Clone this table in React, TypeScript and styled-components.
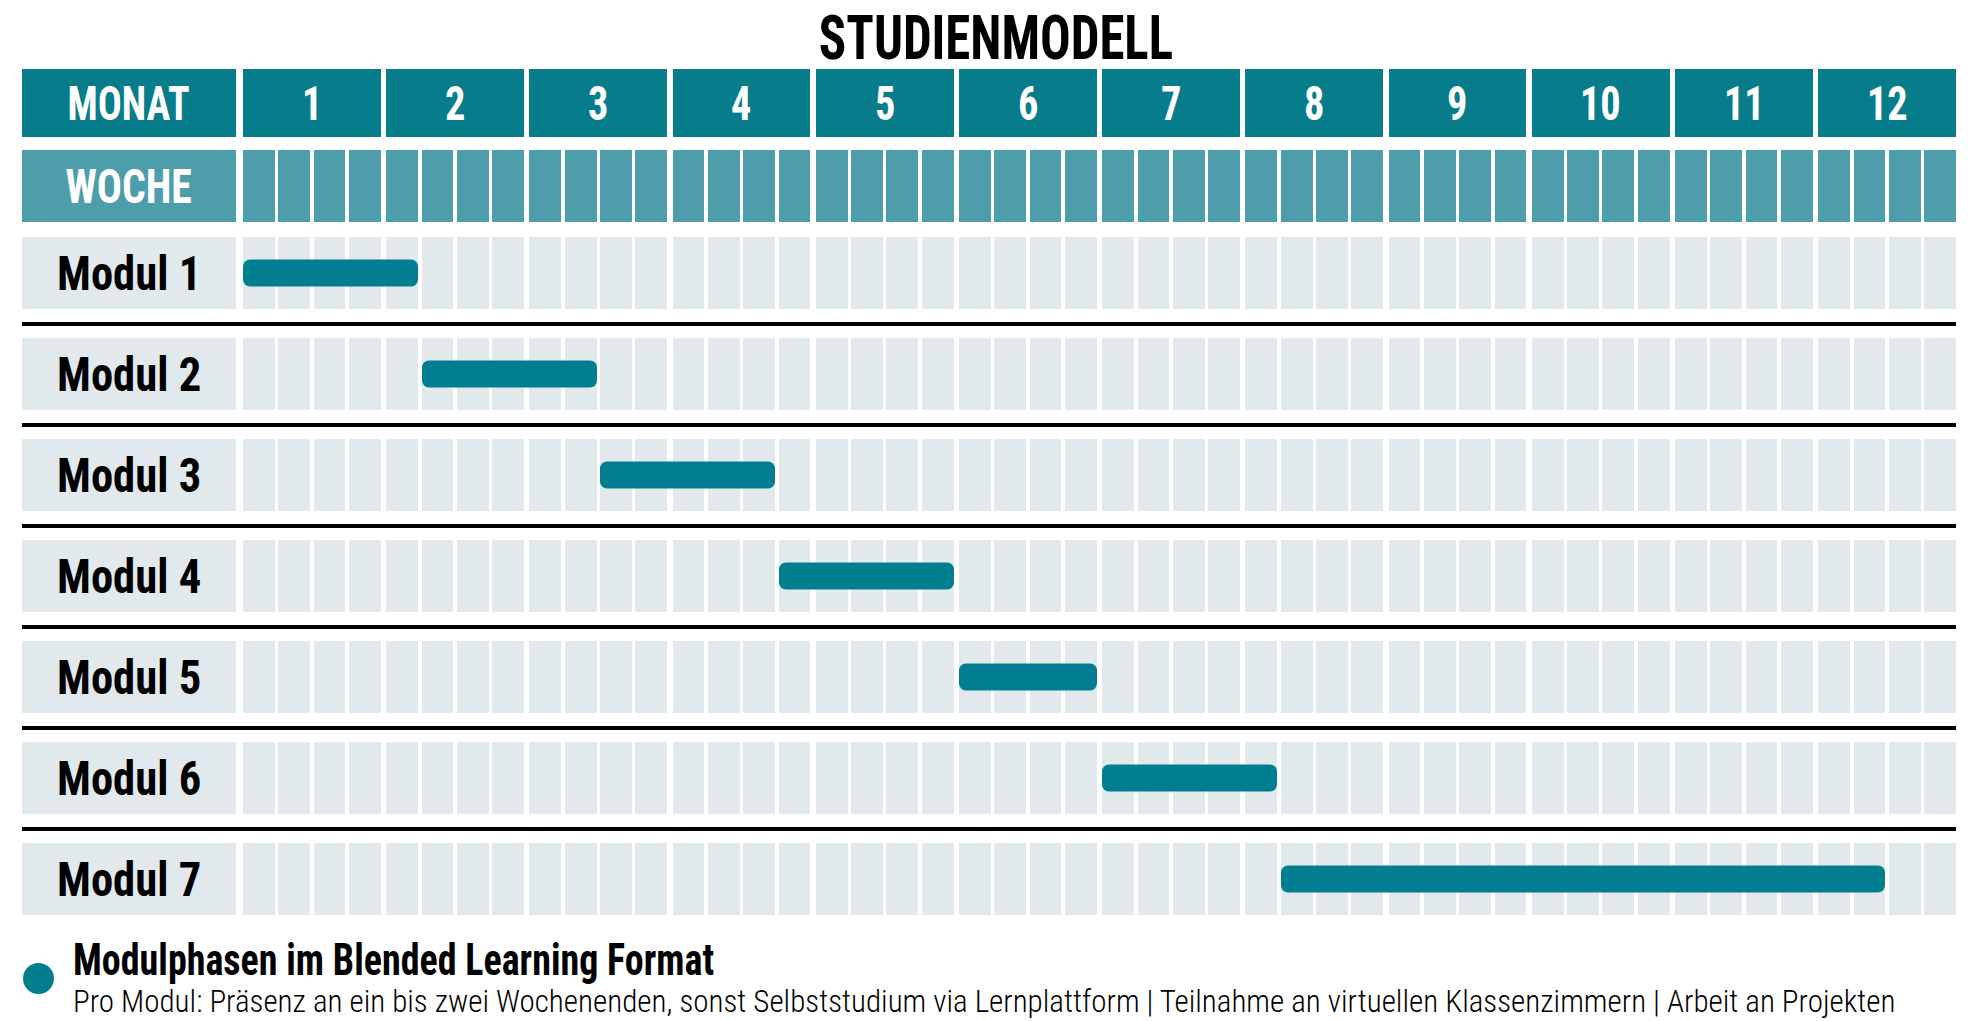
import styled, { createGlobalStyle } from "styled-components";

// grid geometry (px) taken from the reference
const TRACK_WIDTH = 1713;
const MONTH_GAP = 5.5;
const WEEK_GAP = 3.5;
const MONTH_WIDTH = (TRACK_WIDTH - 11 * MONTH_GAP) / 12;
const WEEK_WIDTH = (MONTH_WIDTH - 3 * WEEK_GAP) / 4;

const months = Array.from({ length: 12 }, (_, i) => i + 1);

// first and last week (0-based) of every module phase
const modules = [
  { name: "Modul 1", from: 0, to: 4 },
  { name: "Modul 2", from: 5, to: 9 },
  { name: "Modul 3", from: 10, to: 14 },
  { name: "Modul 4", from: 15, to: 19 },
  { name: "Modul 5", from: 20, to: 23 },
  { name: "Modul 6", from: 24, to: 28 },
  { name: "Modul 7", from: 29, to: 45 },
];

function weekStart(i: number) {
  return Math.floor(i / 4) * (MONTH_WIDTH + MONTH_GAP) + (i % 4) * (WEEK_WIDTH + WEEK_GAP);
}

function WeekCells({ tone }: { tone: "head" | "body" }) {
  return (
    <MonthTrack>
      {months.map((m) => (
        <WeekGroup key={m}>
          {[0, 1, 2, 3].map((w) => (
            <WeekCell key={w} $tone={tone} />
          ))}
        </WeekGroup>
      ))}
    </MonthTrack>
  );
}

function App() {
  return (
    <>
      <GlobalStyle />
      <Page>
        <Title>
          <Squeeze $x={0.82}>STUDIENMODELL</Squeeze>
        </Title>

        <Row $height={68}>
          <LabelCell $tone="dark">
            <Squeeze $x={0.83}>MONAT</Squeeze>
          </LabelCell>
          <MonthTrack>
            {months.map((m) => (
              <MonthCell key={m}>
                <Squeeze $x={0.84}>{m}</Squeeze>
              </MonthCell>
            ))}
          </MonthTrack>
        </Row>

        <Row $height={72} $top={13}>
          <LabelCell $tone="mid">
            <Squeeze $x={0.87}>WOCHE</Squeeze>
          </LabelCell>
          <WeekCells tone="head" />
        </Row>

        <Modules>
          {modules.map((mod, i) => (
            <div key={mod.name}>
              {i > 0 && <Separator />}
              <Row $height={72}>
                <LabelCell $tone="light">
                  <Squeeze $x={0.91}>{mod.name}</Squeeze>
                </LabelCell>
                <BarTrack>
                  <WeekCells tone="body" />
                  <Bar
                    style={{
                      left: weekStart(mod.from),
                      width: weekStart(mod.to) + WEEK_WIDTH - weekStart(mod.from),
                    }}
                  />
                </BarTrack>
              </Row>
            </div>
          ))}
        </Modules>

        <Legend>
          <Dot />
          <LegendText>
            <LegendTitle>
              <Squeeze $x={0.845} $left>
                Modulphasen im Blended Learning Format
              </Squeeze>
            </LegendTitle>
            <LegendInfo>
              <Squeeze $x={0.97} $left>
                Pro Modul: Präsenz an ein bis zwei Wochenenden, sonst Selbststudium via
                Lernplattform | Teilnahme an virtuellen Klassenzimmern | Arbeit an Projekten
              </Squeeze>
            </LegendInfo>
          </LegendText>
        </Legend>
      </Page>
    </>
  );
}

export default App;

const GlobalStyle = createGlobalStyle`
  html, body {
    margin: 0;
    padding: 0;
    background: #ffffff;
  }

  body {
    font-family: "Roboto Condensed", "Liberation Sans Narrow", "DejaVu Sans Condensed", Roboto, sans-serif;
    font-stretch: condensed;
    color: #000000;
  }
`;

// the reference face is narrower than Roboto Condensed, so text gets squeezed a little
const Squeeze = styled.span<{ $x: number; $left?: boolean }>`
  display: inline-block;
  white-space: nowrap;
  transform: scaleX(${(p) => p.$x});
  transform-origin: ${(p) => (p.$left ? "left center" : "center")};
`;

const Page = styled.div`
  width: 1978px;
  height: 1021px;
  box-sizing: border-box;
  padding: 0 22px;
  overflow: hidden;
`;

const Title = styled.h1`
  margin: 0;
  height: 69px;
  line-height: 76px;
  padding-left: 14px;
  text-align: center;
  font-size: 62px;
  font-weight: 700;
`;

const Row = styled.div<{ $height: number; $top?: number }>`
  display: grid;
  grid-template-columns: 214px 1fr;
  column-gap: 7px;
  height: ${(p) => p.$height}px;
  margin-top: ${(p) => p.$top ?? 0}px;
`;

const LabelCell = styled.div<{ $tone: "dark" | "mid" | "light" }>`
  display: flex;
  align-items: center;
  justify-content: center;
  font-size: ${(p) => (p.$tone === "light" ? 49 : 48)}px;
  font-weight: 700;
  color: ${(p) => (p.$tone === "light" ? "#000000" : "#ffffff")};
  background: ${(p) =>
    p.$tone === "dark" ? "#077c8b" : p.$tone === "mid" ? "#4d9eaa" : "#e1e9ec"};
`;

const MonthTrack = styled.div`
  display: grid;
  grid-template-columns: repeat(12, 1fr);
  column-gap: ${MONTH_GAP}px;
  height: 100%;
`;

const MonthCell = styled.div`
  display: flex;
  align-items: center;
  justify-content: center;
  background: #077c8b;
  color: #ffffff;
  font-size: 48px;
  font-weight: 700;
`;

const WeekGroup = styled.div`
  display: grid;
  grid-template-columns: repeat(4, 1fr);
  column-gap: ${WEEK_GAP}px;
`;

const WeekCell = styled.div<{ $tone: "head" | "body" }>`
  background: ${(p) => (p.$tone === "head" ? "#4d9eaa" : "#e1e9ec")};
`;

const Modules = styled.div`
  margin-top: 15px;
`;

const Separator = styled.div`
  height: 4px;
  margin: 12.5px 0;
  background: #000000;
`;

const BarTrack = styled.div`
  position: relative;
  height: 100%;
`;

const Bar = styled.div`
  position: absolute;
  top: 50%;
  height: 27px;
  transform: translateY(-50%);
  border-radius: 7px;
  background: #027e91;
`;

const Legend = styled.div`
  display: flex;
  align-items: center;
  gap: 19px;
  margin-top: 22px;
  padding-left: 1px;
`;

const Dot = styled.div`
  flex: none;
  width: 31px;
  height: 31px;
  border-radius: 50%;
  background: #037e8f;
`;

const LegendText = styled.div`
  display: flex;
  flex-direction: column;
`;

const LegendTitle = styled.div`
  font-size: 45px;
  font-weight: 700;
  line-height: 46px;
`;

const LegendInfo = styled.div`
  font-size: 32px;
  font-weight: 300;
  line-height: 36px;
`;
